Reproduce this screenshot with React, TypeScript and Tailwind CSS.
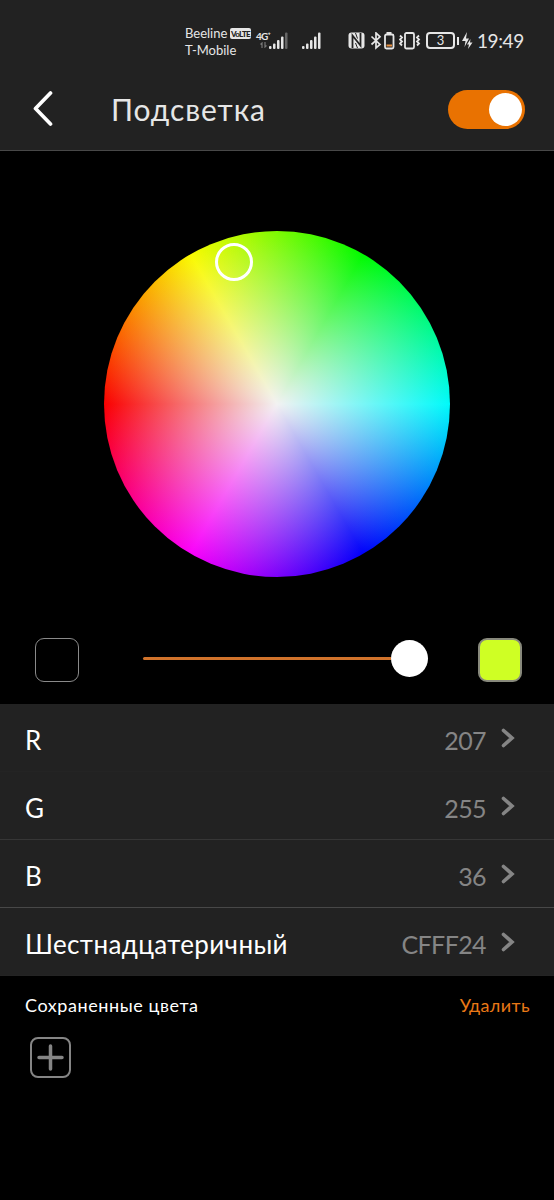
import { useState } from "react";

interface Channel {
    id: string;
    label: string;
    value: string;
}

const channels: Channel[] = [
    { id: "r", label: "R", value: "207" },
    { id: "g", label: "G", value: "255" },
    { id: "b", label: "B", value: "36" },
    { id: "hex", label: "Шестнадцатеричный", value: "CFFF24" },
];

const Signal = ({ dimLast = false }: { dimLast?: boolean }) => (
    <svg width="19" height="17" viewBox="0 0 19 17" fill="#e6e6e6">
        <rect x="0" y="14" width="2.5" height="3" rx="1" />
        <rect x="4" y="11.5" width="2.5" height="5.5" rx="1" />
        <rect x="8" y="8" width="2.5" height="9" rx="1" />
        <rect x="12" y="4.5" width="2.5" height="12.5" rx="1" />
        <rect x="16" y="0.5" width="2.5" height="16.5" rx="1" fill={dimLast ? "#666" : "#e6e6e6"} />
    </svg>
);

const StatusBar = () => (
    <div className="flex h-[72px] pl-[185px] pt-[25px] text-[#e6e6e6]">
        <div className="w-[66px] whitespace-nowrap text-[13px] leading-[17px]">
            <div className="flex items-center gap-[3px]">
                <span className="w-[42px]">Beeline</span>
                <span className="flex h-[11px] w-[21px] shrink-0 items-center justify-center rounded-[2px] bg-[#e6e6e6] text-[8px] font-black leading-none tracking-[-0.7px] text-[#222]">
                    VoLTE
                </span>
            </div>
            <div>T-Mobile</div>
        </div>
        <div className="ml-[5px] flex h-8 w-[31px] pt-[5px]">
            <div className="w-[13px] whitespace-nowrap text-[10px] font-bold leading-[12px] tracking-[-0.8px]">
                4G⁺
                <svg className="ml-[4px]" width="7" height="6" viewBox="0 0 7 6" fill="none" stroke="#777" strokeWidth="1.2">
                    <path d="M2 6V1L0.5 2.5M5 0v5l1.5-1.5" />
                </svg>
            </div>
            <div className="pt-[2px]">
                <Signal dimLast />
            </div>
        </div>
        <div className="ml-[15px] pt-[7px]">
            <Signal />
        </div>
        <svg className="ml-[27px] mt-[7px]" width="17" height="18" viewBox="0 0 17 18">
            <rect x="0.5" y="0.5" width="16" height="16" rx="3" fill="#e6e6e6" />
            <path d="M4.500 16V3.500L12.500 13.500V1" fill="none" stroke="#222" strokeWidth="1.800" />
            <path d="M7.500 1L9.500 6.500M7.500 11L9.500 16" fill="none" stroke="#222" strokeWidth="1" />
        </svg>
        <svg className="ml-[5px] mt-[7px]" width="26" height="18" viewBox="0 0 26 18" fill="none" stroke="#e6e6e6" strokeWidth="1.700">
            <path d="M1.500 4.500L10 12.500L6 16V1L10 4.800L1.500 12.500" />
            <path d="M16.500 1h5" strokeWidth="2" />
            <rect x="15" y="2.500" width="8.500" height="14" rx="1.500" strokeWidth="1.800" />
            <path d="M16.500 13.500h5.500" stroke="#e89040" strokeWidth="2" />
        </svg>
        <svg className="ml-[3px] mt-[7px]" width="22" height="18" viewBox="0 0 22 18" fill="none" stroke="#e6e6e6" strokeWidth="1.800">
            <rect x="6" y="1" width="9" height="15.500" rx="1.500" />
            <path d="M1 3.500l2 2-2 2 2 2-2 2 2 2M20 3.500l-2 2 2 2-2 2 2 2-2 2" />
        </svg>
        <div className="ml-[5px] mt-[7px] flex h-[17px] w-[29px] shrink-0 items-center justify-center rounded-[4px] border-2 border-[#e6e6e6] text-[13px] leading-none">
            3
        </div>
        <div className="ml-[2px] mt-[12px] h-[8px] w-[2px] shrink-0 bg-[#e6e6e6]"></div>
        <svg className="ml-[3px] mt-[7px] shrink-0" width="11" height="18" viewBox="0 0 11 18" fill="#e6e6e6">
            <path d="M5 0L0 9h3.500L2.500 15L7 6.500H4z" />
            <path d="M8.500 7L5 12.500h2L6 17l4.500-6.500H8z" />
        </svg>
        <span className="ml-[4px] mt-[4px] whitespace-nowrap text-[19px] leading-6 tracking-[-0.4px]">19:49</span>
    </div>
);

const App = () => {
    const [enabled, setEnabled] = useState(true);

    return (
        <div className="h-[1200px] w-[554px] overflow-hidden bg-black font-['Lato','Noto_Sans',sans-serif] text-white">
            <header className="h-[151px] border-b border-[#484848] bg-[#222]">
                <StatusBar />
                <div className="flex h-[74px] items-center pl-[33px] pr-[29px]">
                    <svg width="20" height="36" viewBox="0 0 20 36" fill="none" stroke="white" strokeWidth="3.700" strokeLinecap="round" strokeLinejoin="round">
                        <path d="M17.500 2L2.500 17.500L17.500 33" />
                    </svg>
                    <h1 className="ml-[58px] text-[30px] leading-9 tracking-[0.9px] text-[#e6e6e6]">Подсветка</h1>
                    <button
                        onClick={() => setEnabled(!enabled)}
                        className={`ml-auto flex h-[39px] w-[77px] items-center rounded-full px-[3px] ${enabled ? "justify-end bg-[#e97201]" : "justify-start bg-[#555]"}`}
                    >
                        <span className="h-[33px] w-[33px] rounded-full bg-white"></span>
                    </button>
                </div>
            </header>

            <div className="flex h-[487px] justify-center pt-[80px]">
                <div className="relative h-[346px] w-[346px] rounded-full bg-[radial-gradient(closest-side,#f2f2f2_0%,rgba(242,242,242,0)_100%),conic-gradient(from_270deg,#fa0000,#fafa00,#00fa00,#00fafa,#0000fa,#fa00fa,#fa0000)]">
                    <div className="absolute left-[111px] top-[12px] h-[38px] w-[38px] rounded-full border-3 border-white"></div>
                </div>
            </div>

            <div className="flex h-[66px] items-start pl-[35px] pr-[32px]">
                <div className="h-[44px] w-[44px] rounded-[9px] border-[1.5px] border-[#8a8a8a]"></div>
                <div className="ml-[64px] flex h-[41px] w-[285px] items-center">
                    <div className="h-[3px] flex-1 rounded-l-full bg-[#d1732b]"></div>
                    <div className="h-[37px] w-[37px] rounded-full bg-white"></div>
                </div>
                <div className="ml-auto h-[44px] w-[44px] rounded-[9px] border-2 border-[#88897c] bg-[#cfff24]"></div>
            </div>

            <div className="h-[272px] bg-[#222]">
                {channels.map((channel) => (
                    <div
                        key={channel.id}
                        className="flex h-[68px] items-center border-b border-[#242424] pl-[25px] pr-[39px] pt-[4px] text-[26px] leading-8 nth-2:border-[#363636] nth-3:border-[#484848]"
                    >
                        <span className="tracking-[0.38px]">{channel.label}</span>
                        <span className="ml-auto text-[25px] tracking-[-0.6px] text-[#858585]">{channel.value}</span>
                        <svg className="-mt-[3px] ml-[15px]" width="14" height="20" viewBox="0 0 14 20" fill="none" stroke="#858585" strokeWidth="3.600" strokeLinecap="round">
                            <path d="M2.500 2.500L11 10L2.500 17.500" />
                        </svg>
                    </div>
                ))}
            </div>

            <div className="flex h-[61px] items-center justify-between px-[25px] pb-[3px] text-[18px]">
                <span className="tracking-[0.57px]">Сохраненные цвета</span>
                <span className="-mr-[1px] tracking-[0.4px] text-[#e97816]">Удалить</span>
            </div>
            <button className="ml-[30px] flex h-[41px] w-[41px] items-center justify-center rounded-[8px] border-2 border-[#858585]">
                <svg width="27" height="27" viewBox="0 0 27 27" stroke="#858585" strokeWidth="3.500" strokeLinecap="round">
                    <path d="M13.500 2v23M2 13.500h23" />
                </svg>
            </button>
        </div>
    );
};

export default App;
